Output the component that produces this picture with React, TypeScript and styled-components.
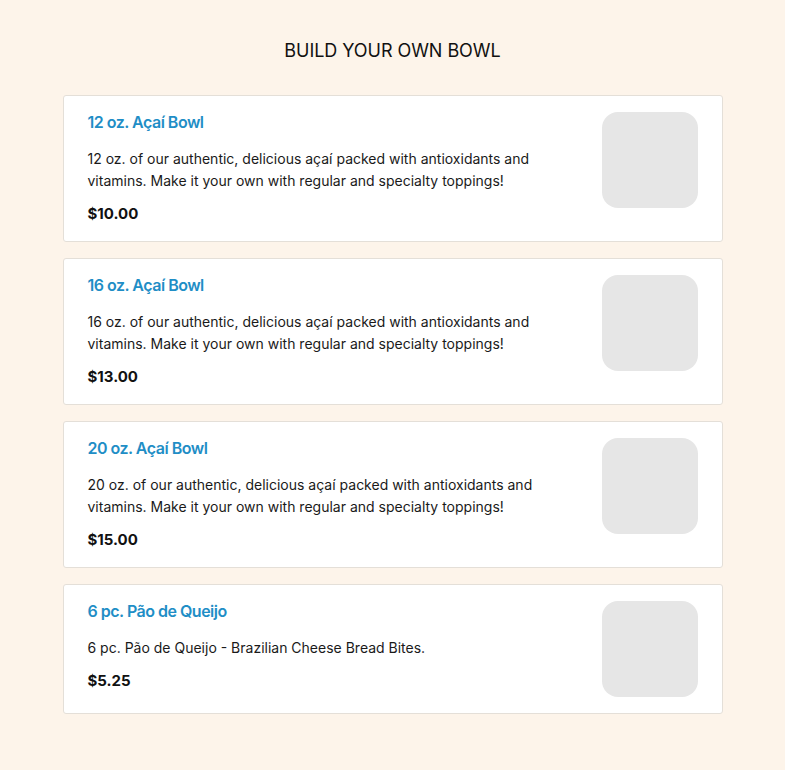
import styled, { createGlobalStyle } from "styled-components";

const GlobalStyle = createGlobalStyle`
  html, body {
    margin: 0;
    padding: 0;
    background: #fdf4ea;
    font-family: Inter, "Noto Sans", sans-serif;
    color: #111;
  }
`;

const Page = styled.main`
  min-height: 100vh;
  padding: 40px 0 40px;
  box-sizing: border-box;
`;

const Heading = styled.h1`
  margin: 0 0 33px;
  text-align: center;
  font-size: 18px;
  line-height: 22px;
  font-weight: 400;
  letter-spacing: -0.05px;
  color: #111;
`;

const List = styled.div`
  width: 660px;
  margin: 0 auto;
  display: flex;
  flex-direction: column;
  gap: 16px;
`;

const Card = styled.div`
  display: flex;
  gap: 24px;
  padding: 16px 24px;
  background: #fff;
  border: 1px solid #e4dfd8;
  border-radius: 3px;
`;

const Info = styled.div`
  flex: 1;
  display: flex;
  flex-direction: column;
`;

const Title = styled.div`
  font-size: 16px;
  line-height: 20px;
  font-weight: 600;
  letter-spacing: -0.5px;
  color: #1f8ec6;
  margin-bottom: 16px;
`;

const Description = styled.p`
  margin: 0 0 11px;
  font-size: 14px;
  line-height: 22px;
  color: #1a1a1a;
`;

const Price = styled.div`
  font-size: 15px;
  line-height: 22px;
  font-weight: 700;
  color: #111;
`;

const Thumb = styled.div`
  flex: none;
  width: 96px;
  height: 96px;
  border-radius: 16px;
  background: #e6e6e6;
`;

const items = [
  {
    title: "12 oz. Açaí Bowl",
    description:
      "12 oz. of our authentic, delicious açaí packed with antioxidants and vitamins. Make it your own with regular and specialty toppings!",
    price: "$10.00",
  },
  {
    title: "16 oz. Açaí Bowl",
    description:
      "16 oz. of our authentic, delicious açaí packed with antioxidants and vitamins. Make it your own with regular and specialty toppings!",
    price: "$13.00",
  },
  {
    title: "20 oz. Açaí Bowl",
    description:
      "20 oz. of our authentic, delicious açaí packed with antioxidants and vitamins. Make it your own with regular and specialty toppings!",
    price: "$15.00",
  },
  {
    title: "6 pc. Pão de Queijo",
    description: "6 pc. Pão de Queijo - Brazilian Cheese Bread Bites.",
    price: "$5.25",
  },
];

export default function App() {
  return (
    <>
      <GlobalStyle />
      <Page>
        <Heading>BUILD YOUR OWN BOWL</Heading>
        <List>
          {items.map((item) => (
            <Card key={item.title}>
              <Info>
                <Title>{item.title}</Title>
                <Description>{item.description}</Description>
                <Price>{item.price}</Price>
              </Info>
              <Thumb />
            </Card>
          ))}
        </List>
      </Page>
    </>
  );
}
